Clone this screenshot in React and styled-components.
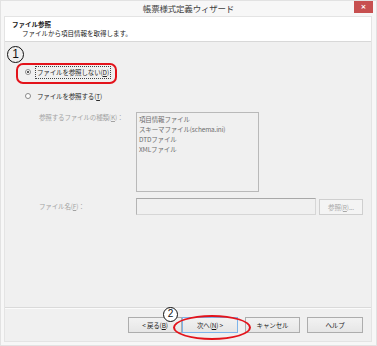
import styled, { createGlobalStyle } from "styled-components";

const GlobalStyle = createGlobalStyle`
  html, body {
    margin: 0;
    padding: 0;
    background: #ffffff;
  }
  body {
    font-family: "Noto Sans CJK JP", "Noto Sans", sans-serif;
  }
`;

const fileTypes = ["項目情報ファイル", "スキーマファイル(schema.ini)", "DTDファイル", "XMLファイル"];

const Window = styled.div`
  width: 377px;
  height: 346px;
  box-sizing: border-box;
  background: #f7f7f7;
  border: 1px solid #e2e2e2;
  display: flex;
  flex-direction: column;
`;

const TitleBar = styled.div`
  height: 15px;
  display: grid;
  grid-template-columns: 1fr auto 1fr;
  align-items: start;
`;

const Title = styled.div`
  grid-column: 2;
  font-size: 8.5px;
  line-height: 15px;
  color: #404040;
  letter-spacing: -0.2px;
`;

const CloseButton = styled.div`
  grid-column: 3;
  justify-self: end;
  margin-right: 3px;
  width: 19px;
  height: 12px;
  background: #c75050;
  color: #fff;
  font-size: 7px;
  line-height: 12px;
  text-align: center;
  font-family: "DejaVu Sans", sans-serif;
  font-weight: bold;
`;

const Client = styled.div`
  flex: 1;
  margin: 0 4px 3px 3px;
  display: flex;
  flex-direction: column;
  border: 1px solid #e4e4e4;
`;

const Header = styled.div`
  height: 25px;
  box-sizing: border-box;
  background: #ffffff;
  border-bottom: 1px solid #d8d8d8;
  padding: 3px 7px;
  font-size: 6.5px;
  line-height: 9px;
  color: #1a1a1a;
`;

const HeaderTitle = styled.div`
  font-weight: bold;
`;

const HeaderText = styled.div`
  padding-left: 10px;
`;

const Body = styled.div`
  flex: 1;
  position: relative;
  background: #f0f0f0;
  display: flex;
  flex-direction: column;
  padding-top: 24px;
  font-size: 6.5px;
  color: #2a2a2a;
  letter-spacing: -0.15px;
`;

const RadioRow = styled.div`
  display: flex;
  align-items: center;
  height: 12px;
  padding-left: 20px;
  margin-bottom: ${p => p.$gap || 0}px;
`;

const Radio = styled.span`
  width: 6px;
  height: 6px;
  box-sizing: border-box;
  border-radius: 50%;
  border: 1px solid #8a8a8a;
  background: #fff;
  margin-right: 4px;
  display: flex;
  align-items: center;
  justify-content: center;
  &::after {
    content: "";
    width: 2px;
    height: 2px;
    border-radius: 50%;
    background: ${p => (p.$checked ? "#222" : "transparent")};
  }
`;

const RadioLabel = styled.span`
  padding: 1px 1px;
  line-height: 9px;
  border: 1px dotted ${p => (p.$focused ? "#444" : "transparent")};
`;

const FieldRow = styled.div`
  display: flex;
  align-items: ${p => p.$align || "flex-start"};
  padding-left: 34px;
  margin-bottom: ${p => p.$gap || 0}px;
`;

const FieldLabel = styled.div`
  width: 97px;
  color: #a3a3a3;
  line-height: 9px;
  padding-top: ${p => p.$top || 0}px;
`;

const ListBox = styled.div`
  width: 123px;
  height: 80px;
  box-sizing: border-box;
  border: 1px solid #b9b9b9;
  background: #f0f0f0;
  padding: 1px 2px;
  color: #6d6d6d;
  font-size: 6.5px;
  line-height: 10px;
`;

const TextInput = styled.div`
  width: 180px;
  height: 17px;
  box-sizing: border-box;
  border: 1px solid #d6d6d6;
  border-top-color: #a8a8a8;
  border-left-color: #b4b4b4;
  background: #f0f0f0;
`;

const SmallButton = styled.div`
  margin-left: 3px;
  width: 44px;
  height: 16px;
  box-sizing: border-box;
  border: 1px solid #cfcfcf;
  background: #f4f4f4;
  color: #a8a8a8;
  text-align: center;
  line-height: 14px;
`;

const Spacer = styled.div`
  flex: 1;
`;

const Footer = styled.div`
  border-top: 1px solid #dadada;
  box-shadow: inset 0 1px 0 #fbfbfb;
  padding: 9px 8px 8px;
  display: flex;
  justify-content: flex-end;
  gap: ${p => p.$gap || 0}px;
`;

const ButtonPair = styled.div`
  display: flex;
`;

const Button = styled.div`
  width: ${p => p.$w || 56}px;
  height: 16px;
  box-sizing: border-box;
  border: 1px solid ${p => (p.$default ? "#7eb4ea" : "#adadad")};
  background: linear-gradient(#f2f2f2, #e6e6e6);
  color: #1a1a1a;
  font-size: 6.5px;
  line-height: 14px;
  text-align: center;
`;

const MarkCircle = styled.div`
  position: absolute;
  left: ${p => p.$x}px;
  top: ${p => p.$y}px;
  width: ${p => p.$size}px;
  height: ${p => p.$size}px;
  box-sizing: border-box;
  border-radius: 50%;
  border: 1.4px solid #111;
  background: ${p => p.$bg || "transparent"};
  font-family: "Liberation Sans", sans-serif;
  font-size: ${p => p.$size - 5}px;
  line-height: ${p => p.$size - 3}px;
  text-align: center;
  color: #111;
  letter-spacing: 0;
`;

const RedRect = styled.div`
  position: absolute;
  left: 11px;
  top: 21px;
  width: 101px;
  height: 21px;
  box-sizing: border-box;
  border: 2.5px solid #e3131b;
  border-radius: 7px;
`;

const RedEllipse = styled.div`
  position: absolute;
  left: 168px;
  top: 273px;
  width: 78px;
  height: 25px;
  box-sizing: border-box;
  border: 2.5px solid #e3131b;
  border-radius: 50%;
`;

export default function App() {
  return (
    <>
      <GlobalStyle />
      <Window>
        <TitleBar>
          <Title>帳票様式定義ウィザード</Title>
          <CloseButton>×</CloseButton>
        </TitleBar>
        <Client>
          <Header>
            <HeaderTitle>ファイル参照</HeaderTitle>
            <HeaderText>ファイルから項目情報を取得します。</HeaderText>
          </Header>
          <Body>
            <RadioRow $gap={12}>
              <Radio $checked />
              <RadioLabel $focused>ファイルを参照しない(<u>D</u>)</RadioLabel>
            </RadioRow>
            <RadioRow $gap={10}>
              <Radio />
              <RadioLabel>ファイルを参照する(<u>T</u>)</RadioLabel>
            </RadioRow>
            <FieldRow $gap={6}>
              <FieldLabel $top={1}>参照するファイルの種類(<u>K</u>)：</FieldLabel>
              <ListBox>
                {fileTypes.map(t => (
                  <div key={t}>{t}</div>
                ))}
              </ListBox>
            </FieldRow>
            <FieldRow $align="center">
              <FieldLabel>ファイル名(<u>F</u>)：</FieldLabel>
              <TextInput />
              <SmallButton>参照(<u>R</u>)...</SmallButton>
            </FieldRow>
            <Spacer />
            <Footer $gap={7}>
              <ButtonPair>
                <Button $w={54}>&lt; 戻る(<u>B</u>)</Button>
                <Button $default>次へ(<u>N</u>) &gt;</Button>
              </ButtonPair>
              <Button $w={55}>キャンセル</Button>
              <Button>ヘルプ</Button>
            </Footer>
            <MarkCircle $x={2} $y={4} $size={17}>1</MarkCircle>
            <RedRect />
            <MarkCircle $x={158} $y={265} $size={15} $bg="#fff">2</MarkCircle>
            <RedEllipse />
          </Body>
        </Client>
      </Window>
    </>
  );
}
